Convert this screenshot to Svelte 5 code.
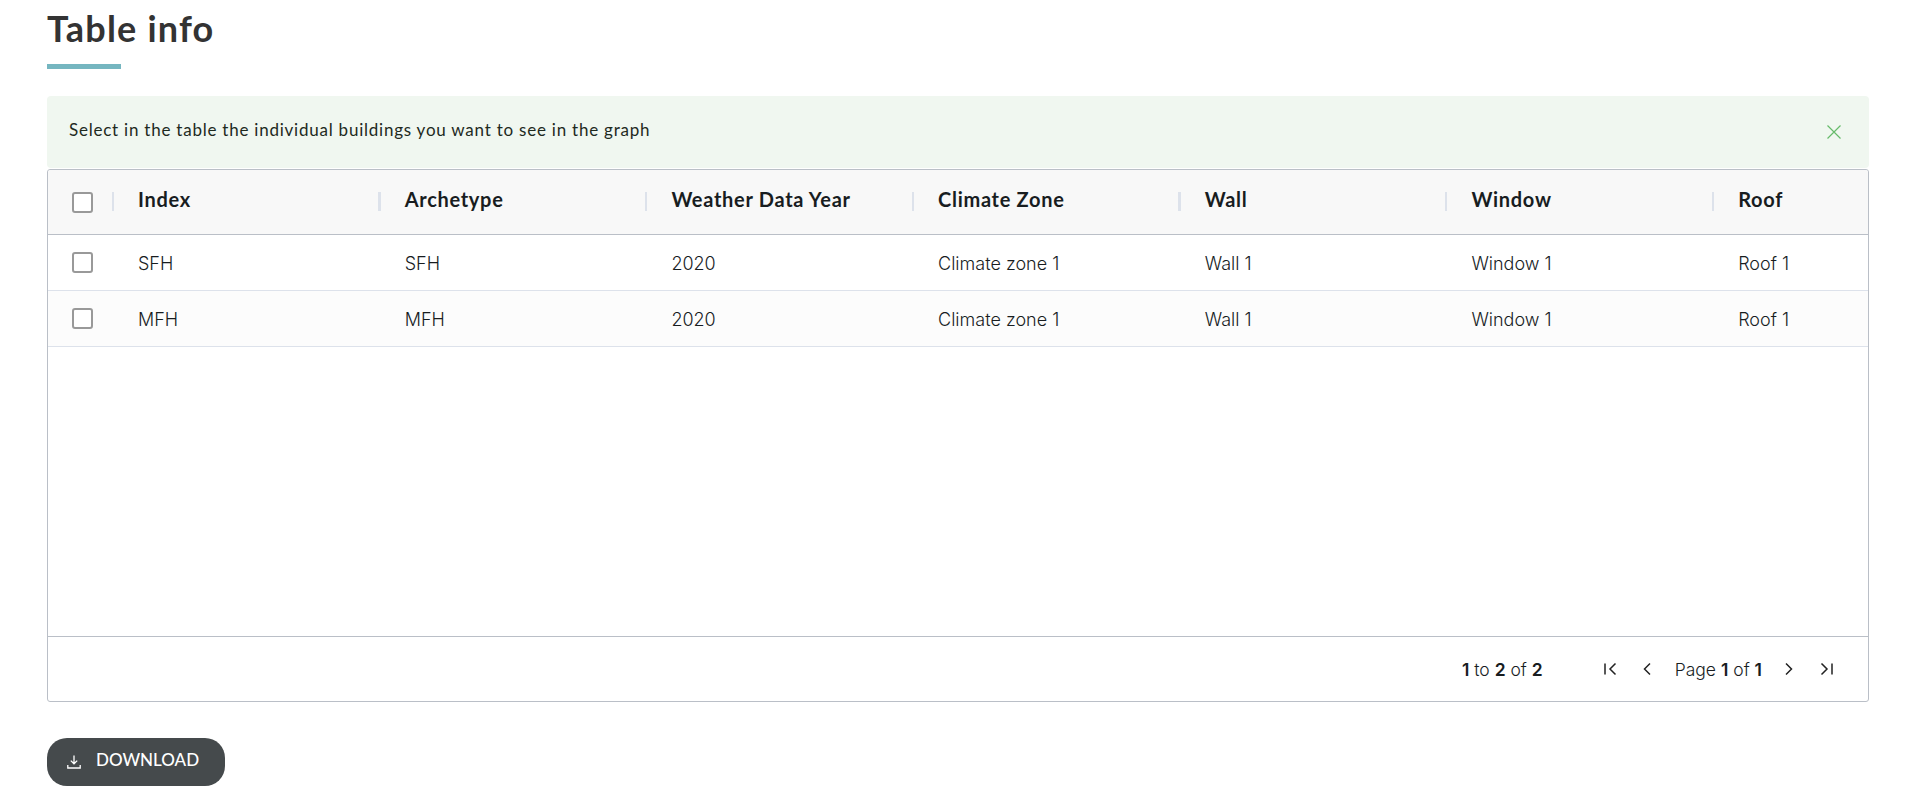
<script>
  const columns = ['Index', 'Archetype', 'Weather Data Year', 'Climate Zone', 'Wall', 'Window', 'Roof'];
  const rows = [
    ['SFH', 'SFH', '2020', 'Climate zone 1', 'Wall 1', 'Window 1', 'Roof 1'],
    ['MFH', 'MFH', '2020', 'Climate zone 1', 'Wall 1', 'Window 1', 'Roof 1']
  ];
</script>

<div class="page">
  <h2 class="title">Table info</h2>
  <div class="rule"></div>

  <div class="alert">
    <span class="alert-text">Select in the table the individual buildings you want to see in the graph</span>
    <svg class="close" width="16" height="16" viewBox="0 0 16 16" fill="none" stroke="#66bb6a" stroke-width="1.2">
      <path d="M1.5 1.5l13 13M14.5 1.5l-13 13" />
    </svg>
  </div>

  <div class="grid">
    <div class="row head">
      <div class="check-cell"><span class="box"></span><i class="sep first"></i></div>
      {#each columns as col, i}
        <div class="cell">
          {#if i > 0}<i class="sep"></i>{/if}
          <span class="label">{col}</span>
        </div>
      {/each}
    </div>

    <div class="body">
      {#each rows as row, r}
        <div class="row data" class:odd={r % 2 === 1}>
          <div class="check-cell"><span class="box"></span></div>
          {#each row as val}
            <div class="cell"><span class="val">{val}</span></div>
          {/each}
        </div>
      {/each}
    </div>

    <div class="pager">
      <span class="summary"><b>1</b> to <b>2</b> of <b>2</b></span>
      <div class="pages">
        <svg width="16" height="16" viewBox="0 0 16 16" fill="none" stroke="#222" stroke-width="1.5">
          <path d="M3 2.5v11M13.5 2.5L8 8l5.5 5.5" />
        </svg>
        <svg class="prev" width="16" height="16" viewBox="0 0 16 16" fill="none" stroke="#222" stroke-width="1.5">
          <path d="M11 2.5L5.5 8l5.5 5.5" />
        </svg>
        <span class="page-label">Page <b>1</b> of <b>1</b></span>
        <svg width="16" height="16" viewBox="0 0 16 16" fill="none" stroke="#222" stroke-width="1.5">
          <path d="M5 2.5L10.5 8 5 13.5" />
        </svg>
        <svg class="last" width="16" height="16" viewBox="0 0 16 16" fill="none" stroke="#222" stroke-width="1.5">
          <path d="M2.5 2.5L8 8l-5.5 5.5M13 2.5v11" />
        </svg>
      </div>
    </div>
  </div>

  <button class="download">
    <svg width="14" height="14" viewBox="0 0 14 14" fill="none" stroke="#fff" stroke-width="1.3">
      <path d="M7 .5v8M3.8 5.6L7 8.8l3.2-3.2M.8 10v3h12.4v-3" />
    </svg>
    <span class="download-text">DOWNLOAD</span>
  </button>
</div>

<style>
:global(body) {
  margin: 0;
  background: #fff;
}
.page {
  padding: 0 53px 16px 47px;
  font-family: Inter, sans-serif;
}
.title {
  margin: 0;
  padding-top: 6px;
  font-family: Lato, sans-serif;
  font-size: 36px;
  line-height: 44px;
  font-weight: 700;
  letter-spacing: 1.2px;
  color: #333;
}
.rule {
  width: 74px;
  height: 5px;
  margin-top: 14px;
  background: #75b6c0;
}
.alert {
  margin-top: 27px;
  height: 72px;
  box-sizing: border-box;
  padding: 0 27px 0 22px;
  display: flex;
  align-items: center;
  justify-content: space-between;
  background: #f0f7f0;
  border-radius: 4px;
  font-family: Lato, sans-serif;
  font-size: 17px;
  letter-spacing: 0.77px;
  color: #1e2a1e;
}
.alert-text {
  padding-bottom: 5px;
}
.grid {
  margin-top: 1px;
  height: 533px;
  box-sizing: border-box;
  display: flex;
  flex-direction: column;
  border: 1px solid #babfc7;
  border-radius: 3px;
}
.row {
  display: grid;
  grid-template-columns: 66px repeat(7, 266.7px);
  align-items: center;
}
.head {
  height: 64px;
  background: #f8f8f8;
  border-bottom: 1px solid #babfc7;
  border-radius: 3px 3px 0 0;
  font-family: Lato, sans-serif;
  font-size: 20px;
  font-weight: 700;
  letter-spacing: 0.7px;
  color: #181d1f;
}
.label {
  position: relative;
  top: -3px;
}
.body {
  flex: 1;
}
.data {
  height: 55px;
  border-bottom: 1px solid #dde2eb;
  font-size: 18px;
  font-weight: 300;
  color: #181d1f;
}
.val {
  position: relative;
  top: 1px;
}
.odd {
  background: #fcfcfc;
}
.check-cell {
  position: relative;
  display: flex;
  padding-left: 24px;
}
.cell {
  position: relative;
  padding-left: 24px;
  white-space: nowrap;
}
.box {
  width: 17px;
  height: 17px;
  border: 2px solid #999;
  border-radius: 3px;
  background: #fff;
}
.sep {
  position: absolute;
  left: -2.5px;
  top: 50%;
  width: 2.5px;
  height: 19px;
  margin-top: -10px;
  background: #dde2eb;
}
.sep.first {
  left: 64px;
  width: 2px;
}
.pager {
  height: 64px;
  border-top: 1px solid #babfc7;
  display: flex;
  align-items: center;
  justify-content: flex-end;
  padding-right: 33px;
  font-size: 17.5px;
  font-weight: 300;
  color: #181d1f;
}
.pager b {
  font-weight: 600;
}
.summary {
  margin-right: 59px;
}
.pages {
  display: flex;
  align-items: center;
  gap: 20px;
}
.prev {
  margin-left: 1px;
}
.page-label {
  margin-right: -1px;
}
.last {
  margin-left: 2px;
}
.download {
  margin-top: 36px;
  width: 178px;
  height: 48px;
  display: flex;
  align-items: center;
  gap: 15px;
  padding: 0 0 0 20px;
  border: none;
  border-radius: 20px;
  background: #454a4c;
  color: #fff;
  font-family: Lato, sans-serif;
  font-size: 17px;
  font-weight: 500;
}
.download-text {
  padding-bottom: 5px;
}
</style>
